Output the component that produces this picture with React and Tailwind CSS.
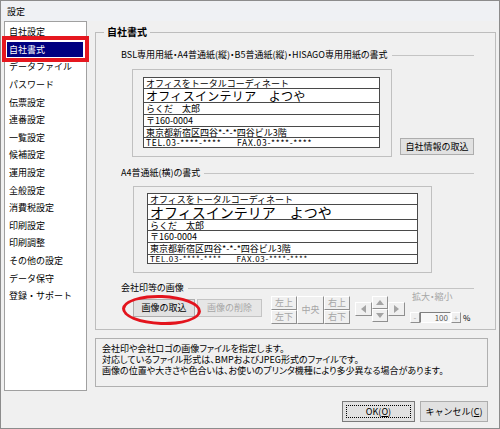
import React from 'react'

const menu = [
  '自社設定',
  '自社書式',
  'データファイル',
  'パスワード',
  '伝票設定',
  '連番設定',
  '一覧設定',
  '候補設定',
  '運用設定',
  '全般設定',
  '消費税設定',
  '印刷設定',
  '印刷調整',
  'その他の設定',
  'データ保守',
  '登録・サポート',
]

const raised = 'border border-t-white border-l-white border-r-[#8f8f8f] border-b-[#8f8f8f] bg-[#f0f0f0]'

function SectionHeader({ children }) {
  return (
    <div className="flex h-[12px] items-center gap-[4px]">
      <span className="whitespace-nowrap leading-[12px] [font-feature-settings:'palt']">{children}</span>
      <div className="h-px flex-1 bg-[#c4c4c4]" />
    </div>
  )
}

function Row({ h, size = 'text-[9px]', last, children }) {
  return (
    <div
      className={`${h} ${size} ${last ? '' : 'border-b border-[#4a4a4a]'} flex items-center overflow-hidden whitespace-pre pl-[2px] leading-none`}
    >
      {children}
    </div>
  )
}

function Arrow({ dir }) {
  const pts = {
    left: '5,0 5,8 0,4',
    right: '0,0 0,8 5,4',
    up: '0,5 8,5 4,0',
    down: '0,0 8,0 4,5',
  }[dir]
  const box = dir === 'left' || dir === 'right' ? { w: 5, h: 8 } : { w: 8, h: 5 }
  return (
    <svg width={box.w} height={box.h} viewBox={`0 0 ${box.w} ${box.h}`}>
      <polygon points={pts} fill="#a4a4a4" />
    </svg>
  )
}

const telLine = 'TEL.03-****-****      FAX.03-****-****'

export default function App() {
  return (
    <div className="flex h-[429px] w-[500px] flex-col overflow-hidden border border-[#8c8c8c] bg-[#f0f0f0] font-['Noto_Sans_CJK_JP',sans-serif] text-[9px] text-black">
      {/* title bar */}
      <div className="h-[20px] shrink-0 bg-[#eff1f4] pl-[6px] leading-[21px]">設定</div>

      <div className="flex h-[370px] shrink-0 gap-[8px] pl-[3px]">
        {/* menu list */}
        <div className="relative h-full w-[83px] border border-[#a0a0a0] bg-white pt-[1px]">
          {menu.map((m) => {
            const sel = m === '自社書式'
            return (
              <div key={m} className="relative flex h-[17.6px] items-center">
                {sel ? (
                  <>
                    <div className="ml-[2px] flex h-[15px] w-[76px] items-center bg-[#000080] pl-[2px] leading-[15px] text-white">
                      {m}
                    </div>
                    <div className="absolute left-[-3px] top-[-5px] z-10 h-[26px] w-[87px] border-4 border-[#e5171f]" />
                  </>
                ) : (
                  <span className="pl-[4px] leading-[17px]">{m}</span>
                )}
              </div>
            )
          })}
        </div>

        {/* right column */}
        <div className="flex w-[394px] flex-col">
          <fieldset className="mt-[5px] h-[304px] border border-[#bdbdbd]">
            <legend className="ml-[8px] px-[3px] text-[10px] font-bold leading-[12px]">自社書式</legend>
            <div className="pl-[25px] pr-[21px]">
              <div className="mt-[11px]">
                <SectionHeader>BSL専用用紙・A4普通紙(縦)・B5普通紙(縦)・HISAGO専用用紙の書式</SectionHeader>
              </div>

              <div className="mt-[8px] flex items-end">
                <div className="ml-[11px] h-[88px] w-[260px] border border-[#c0c0c0] pl-[10px] pt-[7px]">
                  <div className="w-[237px] border border-[#4a4a4a] bg-white">
                    <Row h="h-[11px]">オフィスをトータルコーディネート</Row>
                    <Row h="h-[14px]" size="text-[12px] tracking-[0.3px]">オフィスインテリア　よつや</Row>
                    <Row h="h-[12px]">らくだ　太郎</Row>
                    <Row h="h-[12px]">〒160-0004</Row>
                    <Row h="h-[11px]">東京都新宿区四谷*-*-*四谷ビル3階</Row>
                    <Row h="h-[9px]" size="text-[8.5px] tracking-[0.7px]" last>
                      {telLine}
                    </Row>
                  </div>
                </div>
                <button className="mb-[2px] ml-[8px] h-[17px] w-[74px] border border-[#adadad] bg-[#e1e1e1] leading-[15px]">
                  自社情報の取込
                </button>
              </div>

              <div className="mt-[10px]">
                <SectionHeader>A4普通紙(横)の書式</SectionHeader>
              </div>

              <div className="ml-[12px] mt-[7px] h-[87px] w-[299px] border border-[#c0c0c0] pl-[13px] pt-[6px]">
                <div className="w-[271px] border border-[#4a4a4a] bg-white">
                  <Row h="h-[11px]">オフィスをトータルコーディネート</Row>
                  <Row h="h-[15px]" size="text-[14px]">オフィスインテリア　よつや</Row>
                  <Row h="h-[11px]">らくだ　太郎</Row>
                  <Row h="h-[12px]">〒160-0004</Row>
                  <Row h="h-[12px]">東京都新宿区四谷*-*-*四谷ビル3階</Row>
                  <Row h="h-[8px]" size="text-[8px] tracking-[0.7px]" last>
                    {telLine}
                  </Row>
                </div>
              </div>

              <div className="mt-[9px]">
                <SectionHeader>会社印等の画像</SectionHeader>
              </div>

              <div className="ml-[12px] mt-[2px] flex h-[28px] items-start">
                <div className="relative mt-[3px]">
                  <button className="h-[18px] w-[62px] border border-[#adadad] bg-[#e1e1e1] leading-[16px]">画像の取込</button>
                  <div className="absolute left-[-11px] top-[-4px] h-[30px] w-[79px] rotate-[2deg] rounded-[50%] border-[3px] border-[#e3141d]" />
                </div>
                <button className="ml-[2px] mt-[3px] h-[18px] w-[65px] border border-[#c4c4c4] bg-[#e6e6e6] leading-[16px] text-[#a6a6a6]">
                  画像の削除
                </button>

                <div className="ml-[9px] flex text-[#a6a6a6]">
                  <div className="flex flex-col">
                    <div className={`${raised} flex h-[14px] w-[26px] items-center justify-center`}>左上</div>
                    <div className={`${raised} flex h-[14px] w-[26px] items-center justify-center`}>左下</div>
                  </div>
                  <div className={`${raised} flex h-[28px] w-[27px] items-center justify-center`}>中央</div>
                  <div className="flex flex-col">
                    <div className={`${raised} flex h-[14px] w-[26px] items-center justify-center`}>右上</div>
                    <div className={`${raised} flex h-[14px] w-[26px] items-center justify-center`}>右下</div>
                  </div>
                </div>

                <div className="ml-[5px] flex h-[26px] items-center">
                  <div className={`${raised} flex h-[14px] w-[17px] items-center justify-center`}>
                    <Arrow dir="left" />
                  </div>
                  <div className="flex flex-col">
                    <div className={`${raised} flex h-[13px] w-[16px] items-center justify-center`}>
                      <Arrow dir="up" />
                    </div>
                    <div className={`${raised} flex h-[13px] w-[16px] items-center justify-center`}>
                      <Arrow dir="down" />
                    </div>
                  </div>
                  <div className={`${raised} flex h-[14px] w-[17px] items-center justify-center`}>
                    <Arrow dir="right" />
                  </div>
                </div>

                <div className="-mt-[5px] ml-[5px] flex flex-col">
                  <div className="pl-[2px] leading-[12px] text-[#a6a6a6] [font-feature-settings:'palt']">拡大・縮小</div>
                  <div className="mt-[9px] flex items-center">
                    <div className={`${raised} flex h-[11px] w-[10px] items-center justify-center text-[8px] leading-none text-[#a6a6a6]`}>-</div>
                    <div className="flex h-[11px] w-[31px] items-center justify-end border border-t-[#808080] border-l-[#808080] border-r-white border-b-white bg-[#f7f7f7] pr-[2px] text-[8px] leading-none text-[#555]">
                      100
                    </div>
                    <div className={`${raised} flex h-[11px] w-[10px] items-center justify-center text-[8px] leading-none text-[#a6a6a6]`}>+</div>
                    <span className="ml-[2px] text-[8px] leading-none">%</span>
                  </div>
                </div>
              </div>
            </div>
          </fieldset>

          <div className="mt-[8px] h-[49px] w-[393px] border border-[#b0b0b0] pl-[6px] pt-[4px] leading-[11px] [font-feature-settings:'palt']">
            <div>会社印や会社ロゴの画像ファイルを指定します。</div>
            <div>対応しているファイル形式は、BMPおよびJPEG形式のファイルです。</div>
            <div>画像の位置や大きさや色合いは、お使いのプリンタ機種により多少異なる場合があります。</div>
          </div>
        </div>
      </div>

      <div className="mt-[10px] flex justify-end gap-[5px] pr-[11px]">
        <button className="relative h-[21px] w-[73px] border border-[#7a7a7a] bg-[#e1e1e1] leading-[19px]">
          <span className="absolute inset-[3px] border border-dotted border-black" />
          OK(<span className="underline">O</span>)
        </button>
        <button className="h-[21px] w-[68px] border border-[#adadad] bg-[#e1e1e1] leading-[19px]">
          キャンセル(<span className="underline">C</span>)
        </button>
      </div>
    </div>
  )
}
